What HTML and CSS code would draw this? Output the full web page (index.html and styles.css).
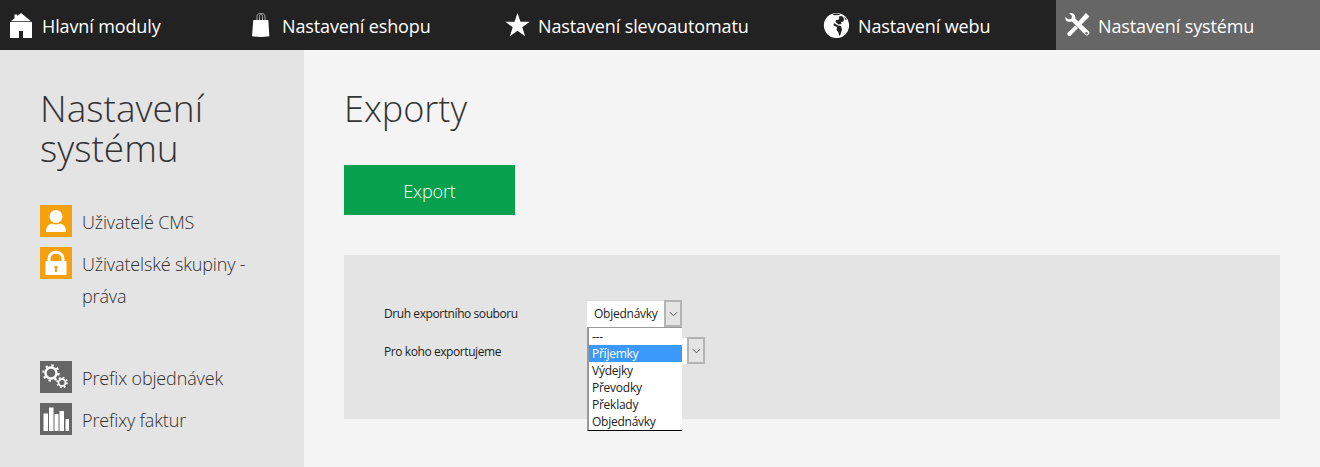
FILE: index.html
```html
<!DOCTYPE html>
<html lang="cs">
<head>
<meta charset="utf-8">
<title>Exporty</title>
<link rel="stylesheet" href="styles.css">
</head>
<body>
<nav class="topbar">
  <a class="tab tab-moduly"><svg class="tab-icon" viewBox="0 0 26 26"><path fill="#fff" d="M2 9.200 5.500 6.300V2.500h2.700v1.600L12 1l10 8.200z"/><path fill="#fff" fill-rule="evenodd" d="M1 10h22v16H14v-7h-4v7H1z"/></svg><span>Hlavní moduly</span></a>
  <a class="tab tab-eshop"><svg class="tab-icon icon-bag" viewBox="0 0 24 26"><path fill="none" stroke="#aaa" stroke-width="1" d="M6 8V4.500c0-4 5.500-4 5.500 0V8M8.500 8V4.500c0-4 5.500-4 5.500 0V8"/><path fill="#fff" d="M2.300 8h15l1 16.300q-8.500 1.300-17.300 0z"/></svg><span>Nastavení eshopu</span></a>
  <a class="tab tab-sleva"><svg class="tab-icon" viewBox="0 0 26 26"><path fill="#fff" d="M12.500 1l3 8.700h9.200l-7.400 5.500 2.800 9-7.600-5.500-7.600 5.500 2.800-9L.3 9.700h9.200z"/></svg><span>Nastavení slevoautomatu</span></a>
  <a class="tab tab-web"><svg class="tab-icon icon-globe" viewBox="0 0 26 26"><circle cx="13.500" cy="13.500" r="12.600" fill="#fff"/><path fill="#222" d="M9.500 1.900q4-1 8 .2l-1.500 1-5 .2zM16 4.500l3-.5 2 2.500-.5 3-2.500.5.500 2-3 .5-3-2.500.5-2 3-.5zM11 11l4 2.500 3 .5 1 3.500-1.500 5-1.500 1.500-.5-3.500-2-2.500.5-3-3.500-1.500zM21 4.200l2.500 3-1 1z"/></svg><span>Nastavení webu</span></a>
  <a class="tab tab-system"><svg class="tab-icon" viewBox="0 0 26 26"><path fill="#fff" d="M.5 5 3.500 7.500 6.500 6.700 7 3.700 4 1.500C7-.2 11.200 2.500 10.200 6.500L24 19.500c1.500 2-1.500 5-3.500 3.500L7 9.500C3 10.800-.5 8.500.5 5z"/><circle cx="21.500" cy="21.200" r="1.200" fill="#666"/><path fill="#fff" d="M20.800 1 24.500 4.500 16 13 14.500 13.500 12.500 11.500 13 10zM10.300 13.500 13 16 5.500 23.800c-1.500 1-4-1.300-3-2.800z"/></svg><span>Nastavení systému</span></a>
</nav>
<div class="layout">
  <aside class="sidebar">
    <h2 class="side-title">Nastavení systému</h2>
    <ul class="side-list">
      <li class="side-item"><span class="side-icon orange"><svg viewBox="0 0 32 32"><circle cx="16" cy="11.500" r="6.500" fill="#fff"/><path fill="#fff" d="M6 27c0-5 2-7.500 6-8.500q4 2 8 0c4 1 6 3.500 6 8.500z"/></svg></span><span class="side-text">Uživatelé CMS</span></li>
      <li class="side-item"><span class="side-icon orange"><svg viewBox="0 0 32 32"><path fill="none" stroke="#fff" stroke-width="3" d="M9 15v-3c0-9 14-9 14 0v3"/><path fill="#fff" d="M5.500 14h21v14h-21z"/><path fill="#f5a10f" d="M14.500 19h3v2l-.5 1v3h-2v-3l-.5-1z"/></svg></span><span class="side-text">Uživatelské skupiny - práva</span></li>
    </ul>
    <ul class="side-list side-list-second">
      <li class="side-item"><span class="side-icon gray"><svg viewBox="0 0 32 32"><circle cx="11" cy="12" r="5.500" fill="none" stroke="#fff" stroke-width="2.400"/><circle cx="11" cy="12" r="7.600" fill="none" stroke="#fff" stroke-width="2.200" stroke-dasharray="2.400 3.570"/><circle cx="22" cy="21.500" r="3.500" fill="none" stroke="#fff" stroke-width="1.800"/><circle cx="22" cy="21.500" r="5" fill="none" stroke="#fff" stroke-width="1.600" stroke-dasharray="1.800 2.130"/></svg></span><span class="side-text">Prefix objednávek</span></li>
      <li class="side-item"><span class="side-icon gray"><svg viewBox="0 0 32 32"><path fill="#fff" d="M3.500 10.500h4.500V28H3.500zM9 4.500h4.500V28H9zM14.500 11h4V28h-4zM19.500 8h4.500v20h-4.500zM25.500 16h3.500v12h-3.500z"/></svg></span><span class="side-text">Prefixy faktur</span></li>
    </ul>
  </aside>
  <main class="content">
    <h1 class="page-title">Exporty</h1>
    <button class="export-btn">Export</button>
    <section class="panel">
      <div class="form-row">
        <label class="form-label">Druh exportního souboru</label>
        <div class="select-wrap">
          <div class="select select-type"><span class="select-value">Objednávky</span><span class="select-arrow"><svg viewBox="0 0 10 6"><path d="M1 1l4 4 4-4" fill="none" stroke="#444" stroke-width="1"/></svg></span></div>
          <ul class="dropdown">
            <li>---</li>
            <li class="selected">Příjemky</li>
            <li>Výdejky</li>
            <li>Převodky</li>
            <li>Překlady</li>
            <li>Objednávky</li>
          </ul>
        </div>
      </div>
      <div class="form-row row-second">
        <label class="form-label">Pro koho exportujeme</label>
        <div class="select select-who"><span class="select-value"></span><span class="select-arrow"><svg viewBox="0 0 10 6"><path d="M1 1l4 4 4-4" fill="none" stroke="#444" stroke-width="1"/></svg></span></div>
      </div>
    </section>
  </main>
</div>
</body>
</html>
```
FILE: styles.css
```css
* { box-sizing: border-box; }
html, body { margin: 0; padding: 0; height: 100%; overflow: hidden; }
body { font-family: "Open Sans", "Noto Sans", sans-serif; background: #f4f4f4; color: #333; }
ul { list-style: none; margin: 0; padding: 0; }

.topbar { display: flex; height: 50px; background: #222; }
.tab { display: flex; align-items: center; height: 50px; padding-left: 9px; color: #fff; font-size: 18px; letter-spacing: -0.12px; }
.tab span { padding-top: 1px; }
.tab-icon { width: 26px; height: 26px; margin-right: 7px; flex: none; }
.icon-bag { width: 24px; }
.icon-globe { margin-right: 9px; }
.tab-moduly { width: 242px; }
.tab-eshop { width: 254px; }
.tab-sleva { width: 318px; }
.tab-web { width: 242px; }
.tab-system { flex: 1; background: #666; }

.layout { display: flex; height: 417px; }
.sidebar { width: 304px; flex: none; background: #e4e4e4; padding: 38px 40px 0; }
.side-title { margin: 0 0 37px; font-size: 37px; font-weight: 300; line-height: 40px; color: #333; width: 200px; }
.side-item { display: flex; font-size: 18px; font-weight: 300; line-height: 32px; letter-spacing: -0.15px; color: #2f2f2f; margin-bottom: 10px; }
.side-item:last-child { margin-bottom: 0; }
.side-text { width: 180px; padding-top: 1px; margin-bottom: -1px; }
.side-icon { width: 32px; height: 32px; flex: none; margin-right: 10px; display: block; }
.side-icon svg { display: block; width: 32px; height: 32px; }
.orange { background: #f5a10f; }
.gray { background: #666; }
.side-list-second { margin-top: 50px; }

.content { flex: 1; padding: 34px 40px 0; }
.page-title { margin: 0 0 31px; font-size: 36px; font-weight: 300; line-height: 50px; color: #333; }
.export-btn { display: block; width: 171px; height: 50px; border: 0; padding: 2px 0 0; background: #07a04c; color: #fff; font-family: inherit; font-size: 18px; font-weight: 300; letter-spacing: -0.1px; }
.panel { margin-top: 40px; width: 936px; height: 164px; background: #e4e4e4; padding: 45px 40px 0; font-size: 12px; letter-spacing: -0.25px; color: #222; }
.form-row { display: flex; align-items: center; }
.form-label { width: 203px; flex: none; letter-spacing: -0.42px; }
.row-second { margin-top: 10px; }
.row-second .form-label { padding-top: 2px; }
.select-wrap { position: relative; }
.select { display: flex; height: 27px; background: #fff; box-shadow: inset 0 1px 0 #ddd; }
.select-type { width: 95px; }
.select-who { width: 118px; }
.select-value { flex: 1; padding: 0 0 0 7px; line-height: 27px; }
.select-arrow { width: 18px; flex: none; background: #e4e4e4; border: 2px solid #b4b4b4; display: flex; align-items: center; justify-content: center; }
.select-arrow svg { width: 9px; height: 6px; display: block; }
.dropdown { position: absolute; top: 27px; left: 0; z-index: 2; width: 95px; height: 104px; background: #fff; border-top: 1px solid #999; border-left: 2px solid #999; border-bottom: 1px solid #000; }
.dropdown li { height: 17px; line-height: 17px; padding-left: 3px; }
.dropdown .selected { background: #3b99fc; color: #fff; }
```
